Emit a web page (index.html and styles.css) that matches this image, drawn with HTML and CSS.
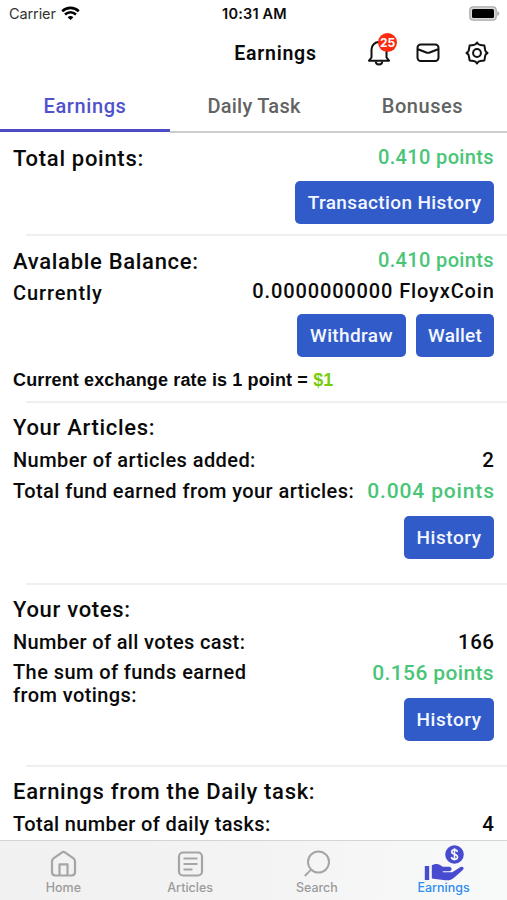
FILE: index.html
```html
<!DOCTYPE html>
<html lang="en">
<head>
<meta charset="utf-8">
<title>Earnings</title>
<link rel="stylesheet" href="styles.css">
</head>
<body>
<div class="screen">
  <header class="status">
    <div class="carrier"><span>Carrier</span>
      <svg width="19" height="15" viewBox="0 0 19 15" fill="none" stroke="#000" stroke-width="2.6"><path d="M1.200 5.200C6 .8 13 .8 17.800 5.200"/><path d="M4 8.500c3.300-2.900 7.700-2.900 11 0"/><path d="M6.600 11.200c1.700-1.500 4.100-1.500 5.800 0L9.500 14z" fill="#000" stroke="none"/></svg>
    </div>
    <div class="time">10:31 AM</div>
    <svg class="battery" width="31" height="15" viewBox="0 0 31 15"><rect x=".8" y=".8" width="26.400" height="13.400" rx="3.500" fill="#d8d8d8" stroke="#aaa" stroke-width="1.200"/><rect x="3" y="3" width="22" height="9" rx="1.500"/><path d="M28.300 5v5q2-1 2-2.500t-2-2.500z" fill="#aaa"/></svg>
  </header>
  <div class="topbar">
    <h1>Earnings</h1>
    <div class="actions">
      <div class="bell">
        <svg width="24" height="26" viewBox="0 0 24 26" fill="none" stroke="#111" stroke-width="2" stroke-linejoin="round"><path d="M4.500 17.500V9.500a7.500 7.500 0 0 1 15 0v8l2.500 3.200H2z"/><path d="M8.700 21.500c.3 4 6.300 4 6.600 0"/></svg>
        <span class="badge">25</span>
      </div>
      <svg width="24" height="20" viewBox="0 0 24 20" fill="none" stroke="#111" stroke-width="2" stroke-linejoin="round"><rect x="1.500" y="1.500" width="21" height="16.500" rx="3.200"/><path d="M2 6.300l8.300 3.200q1.700.6 3.400 0L22 6.300"/></svg>
      <svg width="24" height="24" viewBox="0 0 24 24" fill="none" stroke="#111" stroke-width="2" stroke-linejoin="round"><circle cx="12" cy="12" r="3.900"/><path d="M12 1.500Q13.300 3.900 15.300 3.900L19.400 4.600L20.100 8.700Q20.100 10.700 22.500 12Q20.100 13.300 20.100 15.300L19.400 19.400L15.300 20.100Q13.300 20.100 12 22.500Q10.700 20.100 8.700 20.100L4.600 19.400L3.900 15.300Q3.900 13.300 1.500 12Q3.900 10.700 3.900 8.700L4.600 4.600L8.700 3.900Q10.700 3.900 12 1.500z"/></svg>
    </div>
  </div>
  <nav class="tabs"><a class="tab active"><span class="t-earn">Earnings</span></a><a class="tab"><span class="t-daily">Daily Task</span></a><a class="tab"><span class="t-bonus">Bonuses</span></a></nav>
  <main>
    <section class="total">
      <div class="row head"><h2 class="k-total">Total points:</h2><span class="points">0.410 points</span></div>
      <div class="buttons"><button class="b-trans">Transaction History</button></div>
    </section>
    <section class="balance">
      <div class="row head"><h2 class="k-bal">Avalable Balance:</h2><span class="points">0.410 points</span></div>
      <div class="row line"><span class="k-cur">Currently</span><span class="coin">0.0000000000 FloyxCoin</span></div>
      <div class="buttons"><button class="b-with">Withdraw</button><button class="b-wallet">Wallet</button></div>
      <p class="rate">Current exchange rate is 1 point = <b>$1</b></p>
    </section>
    <section class="stats">
      <div class="row head"><h2 class="k-art">Your Articles:</h2></div>
      <div class="row line"><span class="k-num">Number of articles added:</span><span class="count">2</span></div>
      <div class="row line"><span class="k-fund">Total fund earned from your articles:</span><span class="points large">0.004 points</span></div>
      <div class="buttons"><button class="b-hist">History</button></div>
    </section>
    <section class="stats">
      <div class="row head"><h2 class="k-votes">Your votes:</h2></div>
      <div class="row line"><span class="k-cast">Number of all votes cast:</span><span class="count">166</span></div>
      <div class="row line"><span class="k-sum">The sum of funds earned<br>from votings:</span><span class="points votes">0.156 points</span></div>
      <div class="buttons"><button class="b-hist">History</button></div>
    </section>
    <section class="daily">
      <div class="row head"><h2 class="k-daily">Earnings from the Daily task:</h2></div>
      <div class="row line"><span class="k-tasks">Total number of daily tasks:</span><span class="count">4</span></div>
    </section>
  </main>
  <footer>
    <a><svg width="28" height="28" viewBox="0 0 28 28" fill="none" stroke="#a5a5a5" stroke-width="2.200" stroke-linejoin="round"><path d="M3 11.200q0-1.800 1.500-2.900l8.600-6q1.400-1 2.800 0l8.600 6q1.500 1.100 1.500 2.900V22q0 3.500-3.500 3.500h-16q-3.500 0-3.500-3.500z"/><path d="M10.500 25.500V14.300h8v11.200"/></svg><span class="f-home">Home</span></a>
    <a><svg width="28" height="28" viewBox="0 0 28 28" fill="none" stroke="#a5a5a5" stroke-width="2.200"><rect x="3" y="2.500" width="23" height="23" rx="4"/><path d="M7.500 8.500h14M7.500 14h14M7.500 19.500h9"/></svg><span class="f-art">Articles</span></a>
    <a><svg width="28" height="28" viewBox="0 0 28 28" fill="none" stroke="#a5a5a5" stroke-width="2"><circle cx="15.500" cy="12" r="10.500"/><path d="M8 19.600L1.800 26"/></svg><span class="f-search">Search</span></a>
    <a class="current"><svg class="hand" width="40" height="36" viewBox="0 0 40 36" fill="#484bd0"><circle cx="30.500" cy="9.500" r="9.300"/><path d="M33.400 7c-.5-3.200-5.700-2.700-5.700 0 0 3 5.800 1.700 5.800 4.900 0 3-5.600 3.200-6.100.1M30.500 3.300v12.300" fill="none" stroke="#f7f8fa" stroke-width="1.600"/><rect x=".8" y="21" width="4.400" height="14"/><path d="M7.800 20.300c4.500-2.500 7.500-1.500 11 1.500h6.400c3.100 0 3.200 4.400 0 4.400h-6.400v1h9.500l8.200-5.100c2.400-1.500 4.200 1 2.300 2.800l-8.500 7.700c-2.700 2.400-5.500 3-9 2.700L7.800 33.500z"/></svg><span class="f-earn">Earnings</span></a>
  </footer>
</div>
</body>
</html>
```
FILE: styles.css
```css
* { box-sizing: border-box; }
body { margin: 0; background: #fff; color: #0a0a0a; font-family: Roboto, "Liberation Sans", sans-serif; font-weight: 500; }
.screen { width: 507px; height: 900px; display: flex; flex-direction: column; overflow: hidden; }
span, h1, h2, button { white-space: nowrap; }
svg { display: block; flex: none; }
.status { height: 27px; display: grid; grid-template-columns: 1fr 1fr 1fr; align-items: center; padding: 0 7px 0 9px; font-family: Inter, sans-serif; }
.carrier { display: flex; align-items: center; gap: 5px; font-size: 14.5px; font-weight: 400; color: #333; }
.carrier span { letter-spacing: -.1px; }
.time { text-align: center; font-size: 14.5px; font-weight: 600; letter-spacing: .2px; }
.battery { justify-self: end; }
.topbar { height: 52px; display: grid; grid-template-columns: 1fr auto 1fr; align-items: center; padding-left: 62px; padding-right: 18px; }
h1 { margin: 0; font-size: 19.5px; font-weight: 600; letter-spacing: .75px; grid-column: 2; }
.actions { display: flex; align-items: center; justify-content: flex-end; gap: 25px; }
.bell { position: relative; }
.badge { position: absolute; left: 11px; top: -7px; width: 19px; height: 19px; border-radius: 50%; background: #fb2b12; color: #fff; font: 700 12px/19px Inter, sans-serif; text-align: center; }
.tabs { height: 54px; display: grid; grid-template-columns: 170px 168px 169px; }
.tab { display: flex; align-items: center; justify-content: center; padding-top: 2px; border-bottom: 2px solid #cdcdcd; color: #636363; font-size: 20px; }
.tab.active { border-bottom: 3px solid #4b4cc6; color: #5052cb; margin-bottom: 1px; padding-top: 4px; }
.t-earn { letter-spacing: .6px; }
.t-daily { letter-spacing: .25px; }
.t-bonus { letter-spacing: .55px; }
main { flex: 1; min-height: 0; overflow: hidden; }
section { padding: 12px 13px 0; background: linear-gradient(#f0f0f0, #f0f0f0) 26px 100% / 481px 2px no-repeat; }
.total { height: 103px; }
.balance { height: 167px; }
.stats { height: 182px; }
.daily { background: none; }
.row { display: flex; justify-content: space-between; }
h2 { margin: 0; font-size: 22px; font-weight: 500; letter-spacing: .7px; }
.head { height: 30px; line-height: 26px; }
.total h2, .balance h2 { padding-top: 1px; }
.line { height: 31px; font-size: 20px; line-height: 30px; letter-spacing: .42px; }
.points { color: #49c577; font-size: 20px; letter-spacing: .36px; line-height: 24px; }
.k-cur { letter-spacing: .9px; }
.coin { letter-spacing: .87px; line-height: 26px; margin-right: -.8px; }
.k-cast, .k-tasks { letter-spacing: .36px; }
.points.large, .points.votes { font-size: 21px; line-height: 31px; }
.points.large { letter-spacing: .85px; margin-right: -.8px; }
.buttons { display: flex; justify-content: flex-end; gap: 10px; }
button { height: 43px; padding: 0; border: 0; border-radius: 5px; background: #315bc8; color: #f4f7ff; font: 500 19px Roboto, sans-serif; letter-spacing: .38px; }
.b-trans { width: 199px; }
.b-with { width: 109px; }
.b-wallet { width: 78px; letter-spacing: .15px; }
.b-hist { width: 90px; letter-spacing: .55px; }
.total .buttons { padding-top: 6px; }
.balance .buttons { padding-top: 5px; }
.stats .buttons { padding-top: 9px; }
.rate { margin: 12px 0 0; font: 700 18px/22px "Liberation Sans", sans-serif; letter-spacing: .13px; }
.rate b { color: #78cc0c; }
.k-sum { line-height: 23px; padding-top: 3px; }
.count { font-size: 20.5px; letter-spacing: .5px; margin-right: -.5px; }
footer { height: 60px; border-top: 1px solid #d5d5d5; background: linear-gradient(90deg, #f1f1f1, #f3f3f3 50%, #f8faf9); display: grid; grid-template-columns: repeat(4, 1fr); }
footer a { display: flex; flex-direction: column; align-items: center; justify-content: flex-end; padding-bottom: 5px; color: #9b9b9b; font: 500 12.500px/15px Inter, sans-serif; }
footer a svg { margin-bottom: 2px; }
footer .hand { margin-bottom: -1px; }
footer .current { color: #2f8cf0; }
```
